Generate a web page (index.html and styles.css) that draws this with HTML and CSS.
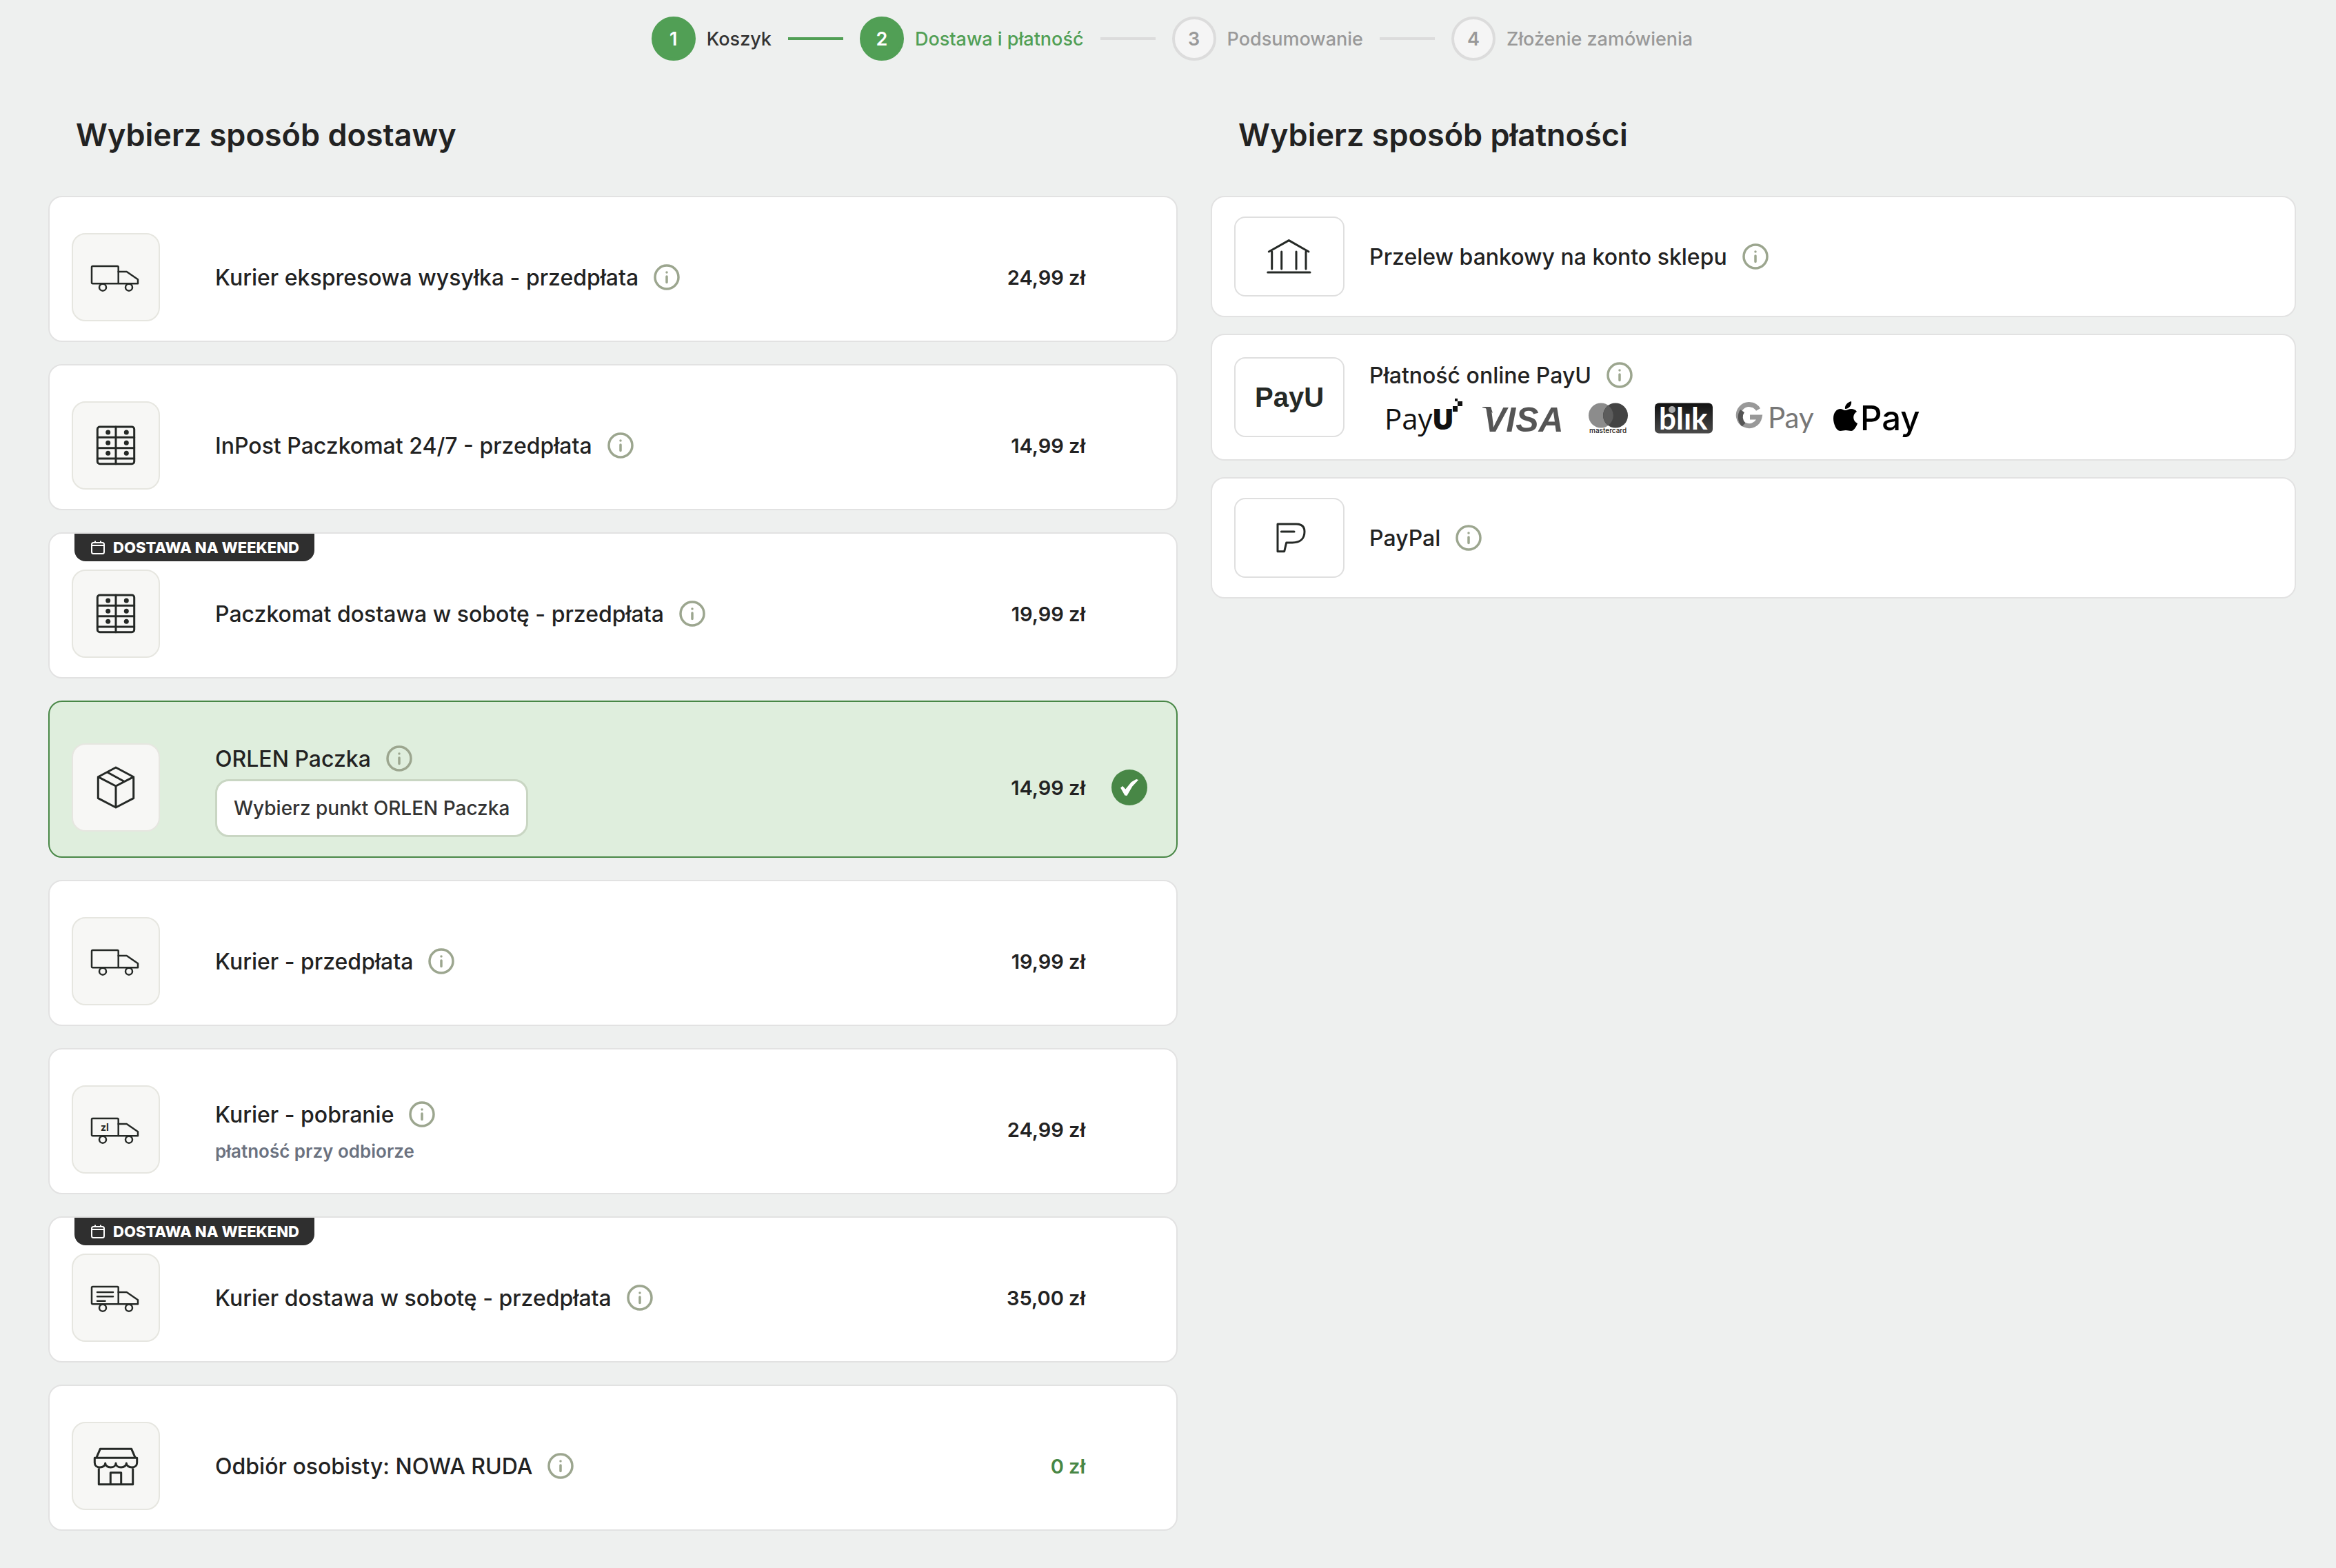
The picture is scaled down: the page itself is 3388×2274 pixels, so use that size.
FILE: index.html
```html
<!DOCTYPE html>
<html lang="pl">
<head>
<meta charset="UTF-8" />
<meta name="viewport" content="width=device-width, initial-scale=1" />
<title>Dostawa i płatność</title>
<link rel="stylesheet" href="styles.css">
</head>
<body>

<!-- icon definitions -->
<svg class="sprite" aria-hidden="true">
  <symbol id="i-info" viewBox="0 0 38 38">
    <circle cx="19" cy="19" r="17" fill="none" stroke="currentColor" stroke-width="3.500" />
    <path d="M19 18v8.500M19 12v.1" fill="none" stroke="currentColor" stroke-width="3.500" stroke-linecap="round" />
  </symbol>
  <symbol id="i-truck" viewBox="0 0 80 80">
    <rect x="5" y="24" width="38.700" height="25.300" rx="1.500" />
    <path d="M43.700 32h12L72 43.300v6H43.700" />
    <circle class="wheel" cx="21" cy="54.700" r="5" />
    <circle class="wheel" cx="59" cy="54.700" r="5" />
  </symbol>
  <symbol id="i-locker" viewBox="0 0 80 80">
    <g stroke-width="3">
      <rect x="13.300" y="13" width="53.400" height="53.700" rx="3.500" />
      <path d="M40 13v53.700M13.300 28.300h53.400M13.300 43.700h53.400M13.300 59h53.400" />
    </g>
    <g fill="currentColor" stroke="none">
      <circle cx="28.700" cy="21" r="3.500" /><circle cx="55.300" cy="21" r="3.500" />
      <circle cx="28.700" cy="36.300" r="3.500" /><circle cx="55.300" cy="36.300" r="3.500" />
      <circle cx="28.700" cy="51.300" r="3.500" /><circle cx="55.300" cy="51.300" r="3.500" />
    </g>
  </symbol>
  <symbol id="i-box" viewBox="0 0 80 80">
    <path stroke-width="3" d="M40 11l25.700 13.700v31L40 69 14.300 55.700v-31zM14.300 24.700L40 38l25.700-13.300M40 38v31M27.300 17.700L52 31.300" />
  </symbol>
  <symbol id="i-store" viewBox="0 0 80 80">
    <path stroke-width="3" d="M11.700 28.300l5.600-13h45.400l5.600 13M9.300 28.300h61.400v7c0 4-3 6.700-7.600 6.700s-7.800-2.700-7.800-6c0 3.300-3.100 6-7.700 6S40 39.300 40 36c0 3.300-3 6-7.600 6s-7.700-2.700-7.700-6c0 3.300-3.100 6-7.700 6s-7.700-2.700-7.700-6.700zM15.300 42v24.700h49.400V42M32.300 66.700v-17h15.400v17" />
  </symbol>
  <symbol id="i-bank" viewBox="0 0 80 80">
    <path stroke-width="3" d="M10.300 33l29-16.400L68 33M14.700 33v25M28.700 33v25M50 33v25M64 33v25M8.700 63H70" />
  </symbol>
  <symbol id="i-paypal" viewBox="0 0 80 80">
    <path stroke-width="3" d="M23 20h27c8 0 12 4 12 11 0 10-6 16-17.700 16h-8.600l-3 12.700H23zM28.300 31H47" />
  </symbol>
  <symbol id="i-calendar" viewBox="0 0 20 20">
    <rect x="1" y="3" width="18" height="16" rx="2.500" fill="none" stroke="currentColor" stroke-width="2" />
    <path d="M1 7h18M6 .5V4M14 .5V4" fill="none" stroke="currentColor" stroke-width="2" />
  </symbol>
</svg>

<main class="checkout">
  <ol class="steps">
    <li class="step done"><span class="num">1</span><span>Koszyk</span></li>
    <li class="step current" aria-current="step"><span class="num">2</span><span>Dostawa i płatność</span></li>
    <li class="step"><span class="num">3</span><span>Podsumowanie</span></li>
    <li class="step"><span class="num">4</span><span>Złożenie zamówienia</span></li>
  </ol>

  <div class="columns">
    <section>
      <h2>Wybierz sposób dostawy</h2>
      <div class="deliveries">

        <div class="delivery">
          <span class="tile"><svg class="icon"><use href="#i-truck" /></svg></span>
          <div class="body">
            <div class="name"><label for="d1">Kurier ekspresowa wysyłka - przedpłata</label><button class="info" type="button" aria-label="Informacje"><svg><use href="#i-info" /></svg></button></div>
          </div>
          <span class="price">24,99 zł</span>
          <input class="pick" type="radio" name="delivery" id="d1">
        </div>

        <div class="delivery">
          <span class="tile"><svg class="icon"><use href="#i-locker" /></svg></span>
          <div class="body">
            <div class="name"><label for="d2">InPost Paczkomat 24/7 - przedpłata</label><button class="info" type="button" aria-label="Informacje"><svg><use href="#i-info" /></svg></button></div>
          </div>
          <span class="price">14,99 zł</span>
          <input class="pick" type="radio" name="delivery" id="d2">
        </div>

        <div class="delivery">
          <span class="badge"><svg><use href="#i-calendar" /></svg>DOSTAWA NA WEEKEND</span>
          <span class="tile"><svg class="icon"><use href="#i-locker" /></svg></span>
          <div class="body">
            <div class="name"><label for="d3">Paczkomat dostawa w sobotę - przedpłata</label><button class="info" type="button" aria-label="Informacje"><svg><use href="#i-info" /></svg></button></div>
          </div>
          <span class="price">19,99 zł</span>
          <input class="pick" type="radio" name="delivery" id="d3">
        </div>

        <div class="delivery selected">
          <span class="tile"><svg class="icon"><use href="#i-box" /></svg></span>
          <div class="body">
            <div class="name"><label for="d4">ORLEN Paczka</label><button class="info" type="button" aria-label="Informacje"><svg><use href="#i-info" /></svg></button></div>
            <button class="point" type="button">Wybierz punkt ORLEN Paczka</button>
          </div>
          <span class="price">14,99 zł</span>
          <input class="pick" type="radio" name="delivery" id="d4" checked>
        </div>

        <div class="delivery">
          <span class="tile"><svg class="icon"><use href="#i-truck" /></svg></span>
          <div class="body">
            <div class="name"><label for="d5">Kurier - przedpłata</label><button class="info" type="button" aria-label="Informacje"><svg><use href="#i-info" /></svg></button></div>
          </div>
          <span class="price">19,99 zł</span>
          <input class="pick" type="radio" name="delivery" id="d5">
        </div>

        <div class="delivery">
          <span class="tile"><svg class="icon" viewBox="0 0 80 80"><use href="#i-truck" /><text class="zl" x="18" y="42">zl</text></svg></span>
          <div class="body">
            <div class="name"><label for="d6">Kurier - pobranie</label><button class="info" type="button" aria-label="Informacje"><svg><use href="#i-info" /></svg></button></div>
            <p class="note">płatność przy odbiorze</p>
          </div>
          <span class="price">24,99 zł</span>
          <input class="pick" type="radio" name="delivery" id="d6">
        </div>

        <div class="delivery">
          <span class="badge"><svg><use href="#i-calendar" /></svg>DOSTAWA NA WEEKEND</span>
          <span class="tile"><svg class="icon" viewBox="0 0 80 80"><use href="#i-truck" /><path d="M13 32h23M13 38.300h23M13 44.700h11.500" /></svg></span>
          <div class="body">
            <div class="name"><label for="d7">Kurier dostawa w sobotę - przedpłata</label><button class="info" type="button" aria-label="Informacje"><svg><use href="#i-info" /></svg></button></div>
          </div>
          <span class="price">35,00 zł</span>
          <input class="pick" type="radio" name="delivery" id="d7">
        </div>

        <div class="delivery">
          <span class="tile"><svg class="icon"><use href="#i-store" /></svg></span>
          <div class="body">
            <div class="name"><label for="d8">Odbiór osobisty: NOWA RUDA</label><button class="info" type="button" aria-label="Informacje"><svg><use href="#i-info" /></svg></button></div>
          </div>
          <span class="price free">0 zł</span>
          <input class="pick" type="radio" name="delivery" id="d8">
        </div>

      </div>
    </section>

    <section>
      <h2>Wybierz sposób płatności</h2>
      <div class="payments">

        <div class="payment">
          <span class="tile"><svg class="icon"><use href="#i-bank" /></svg></span>
          <div class="body">
            <div class="name"><label for="p1">Przelew bankowy na konto sklepu</label><button class="info" type="button" aria-label="Informacje"><svg><use href="#i-info" /></svg></button></div>
          </div>
          <input class="pick" type="radio" name="payment" id="p1">
        </div>

        <div class="payment">
          <span class="tile payu">PayU</span>
          <div class="body">
            <div class="name"><label for="p2">Płatność online PayU</label><button class="info" type="button" aria-label="Informacje"><svg><use href="#i-info" /></svg></button></div>
            <svg class="logos" viewBox="0 0 820 64" role="img" aria-label="PayU, Visa, Mastercard, Blik, Google Pay, Apple Pay">
              <defs>
                <linearGradient id="blik" x1="0" y1="0" x2="0" y2="1">
                  <stop offset="0" stop-color="#111" />
                  <stop offset="1" stop-color="#4a4a4a" />
                </linearGradient>
              </defs>
              <!-- PayU -->
              <text class="l-payu" x="22" y="49">Pay</text>
              <text class="l-payu-u" x="91" y="49">U</text>
              <path d="M124 4h4v4h-4zM128 8h7v7h-7zM121 15h7v8h-7z" fill="#111" />
              <!-- Visa -->
              <text class="l-visa" x="165" y="52">VISA</text>
              <path d="M164 16h12l3 9c-4-4-9-7-15-8z" fill="#555" />
              <!-- Mastercard -->
              <circle cx="336" cy="28.500" r="18" fill="#8c8c8c" />
              <circle cx="357" cy="28.500" r="18" fill="#434343" />
              <path d="M346.500 14a18 18 0 0 1 0 29 18 18 0 0 1 0-29z" fill="#5c5c5c" />
              <text class="l-mc" x="319" y="54">mastercard</text>
              <!-- Blik -->
              <rect x="414" y="10.500" width="84" height="44" rx="6" fill="url(#blik)" />
              <text class="l-blik" x="420" y="49">blık</text>
              <circle cx="439" cy="20" r="5" fill="#aaa" />
              <!-- Google Pay -->
              <path d="M564 20a15.500 15.500 0 1 0 2 11h-14" fill="none" stroke="#999" stroke-width="7" />
              <path d="M541 22a15.500 15.500 0 0 0 2 20" fill="none" stroke="#555" stroke-width="7" />
              <text class="l-gpay" x="578" y="47">Pay</text>
              <!-- Apple Pay -->
              <path d="M699 8c1 5-3 11-9 11-1-5 4-10 9-11zM690 21c3 0 5-2 9-2 3 0 6 1 8 4-7 4-6 14 1 17-2 6-6 11-9 11s-5-1-8-1-5 1-8 1c-6 0-10-11-10-18 0-9 5-14 10-14 3 0 5 2 7 2z" fill="#000" />
              <text class="l-apple" x="712" y="50">Pay</text>
            </svg>
          </div>
          <input class="pick" type="radio" name="payment" id="p2">
        </div>

        <div class="payment">
          <span class="tile"><svg class="icon"><use href="#i-paypal" /></svg></span>
          <div class="body">
            <div class="name"><label for="p3">PayPal</label><button class="info" type="button" aria-label="Informacje"><svg><use href="#i-info" /></svg></button></div>
          </div>
          <input class="pick" type="radio" name="payment" id="p3">
        </div>

      </div>
    </section>
  </div>
</main>

</body>
</html>
```
FILE: styles.css
```css
* {
  box-sizing: border-box;
}
body {
  margin: 0;
  background: #eef0ef;
  color: #222;
  font-family: Inter, sans-serif;
  font-size: 32px;
}
.sprite {
  position: absolute;
  width: 0;
  height: 0;
}
.checkout {
  padding: 24px 58px 54px 70px;
}

/* progress bar */
.steps {
  display: flex;
  justify-content: center;
  gap: 24px;
  margin: 0;
  padding: 0;
  list-style: none;
}
.step {
  display: flex;
  align-items: center;
  gap: 16px;
  height: 64px;
  font-size: 27px;
  font-weight: 500;
  color: #999;
}
.step + .step::before {
  content: "";
  width: 80px;
  height: 4px;
  margin-right: 8px;
  background: #dcdcdc;
}
.num {
  display: flex;
  align-items: center;
  justify-content: center;
  width: 64px;
  height: 64px;
  border: 4px solid #dcdcdc;
  border-radius: 50%;
  background: #f5f5f5;
  font-weight: 600;
}
.step.done {
  color: #333;
}
.step.current {
  color: #519f55;
}
.step.done .num,
.step.current .num {
  border-color: #519f55;
  background: #519f55;
  color: #fff;
}
.step.current::before {
  background: #519f55;
}

/* columns */
.columns {
  display: grid;
  grid-template-columns: 51fr 49fr;
  gap: 48px;
}
h2 {
  margin: 76px 40px 56px;
  font-size: 45px;
  line-height: 64px;
  font-weight: 600;
}
.deliveries {
  display: grid;
  gap: 32px;
}
.payments {
  display: grid;
  gap: 24px;
}
.delivery,
.payment {
  position: relative;
  display: flex;
  align-items: center;
  border: 2px solid #e2e2e2;
  border-radius: 20px;
  background: #fff;
}
.delivery {
  gap: 38px;
  padding: 52px 42px 28px 32px;
}
.payment {
  padding: 28px 42px 28px 32px;
}
.delivery.selected {
  border-color: #488746;
  background: #dfeedd;
}
.tile {
  display: flex;
  flex: none;
  align-items: center;
  justify-content: center;
  color: #252926;
}
.delivery .tile {
  width: 128px;
  height: 128px;
  margin-right: 42px;
  border: 2px solid #e6e6e0;
  border-radius: 20px;
  background: #f7f7f5;
}
.payment .tile {
  width: 160px;
  height: 116px;
  margin-right: 36px;
  border: 2px solid #dfdfdf;
  border-radius: 16px;
}
.tile.payu {
  font-family: "Liberation Sans", Arial, sans-serif;
  font-size: 40px;
  font-weight: 700;
}
.icon {
  width: 80px;
  height: 80px;
  fill: none;
  stroke: currentColor;
  stroke-width: 2.5;
  stroke-linecap: round;
  stroke-linejoin: round;
}
.wheel {
  fill: #f7f7f5;
}
.zl {
  font-size: 14px;
  font-weight: 700;
  fill: currentColor;
  stroke: none;
}
.body {
  flex: 1;
}
.name {
  display: flex;
  align-items: center;
  gap: 22px;
  height: 60px;
  font-weight: 500;
}
.info {
  width: 38px;
  height: 38px;
  padding: 0;
  border: none;
  background: none;
  color: #9ca68f;
  cursor: pointer;
}
.info svg {
  display: block;
  width: 38px;
  height: 38px;
}
.note {
  margin: 4px 0 0;
  font-size: 26px;
  line-height: 40px;
  font-weight: 600;
  color: #6b7280;
}
.point {
  display: block;
  height: 84px;
  padding: 0 24px;
  border: 3px solid #c9d6c3;
  border-radius: 20px;
  background: #fff;
  font-family: inherit;
  font-size: 28px;
  font-weight: 500;
  color: #333;
  cursor: pointer;
}
.price {
  font-size: 29px;
  font-weight: 600;
}
.price.free {
  color: #488746;
}

/* the radio is only seen when ticked */
.pick {
  appearance: none;
  flex: none;
  display: flex;
  align-items: center;
  justify-content: center;
  width: 52px;
  height: 52px;
  margin: 0;
  border-radius: 50%;
  cursor: pointer;
}
.pick:checked {
  background: #488746;
}
.pick:checked::after {
  content: "";
  width: 26px;
  height: 24px;
  background: #fff;
  clip-path: polygon(0 52%, 12% 42%, 28% 60%, 60% 18%, 88% 0, 100% 4%, 66% 44%, 36% 100%, 24% 98%);
}
.badge {
  position: absolute;
  top: 0;
  left: 36px;
  display: flex;
  align-items: center;
  gap: 12px;
  height: 40px;
  padding: 0 22px 0 24px;
  border-radius: 0 0 16px 16px;
  background: #2f2f2f;
  color: #fff;
  font-size: 22px;
  font-weight: 800;
}
.badge svg {
  width: 20px;
  height: 20px;
}

/* payment logos */
.logos {
  display: block;
  width: 820px;
  height: 64px;
}
.l-payu {
  font: 400 42px "Open Sans", sans-serif;
  fill: #111;
}
.l-payu-u {
  font: 800 42px "Open Sans", sans-serif;
  fill: #111;
}
.l-visa {
  font: italic 700 50px "Liberation Sans", Arial, sans-serif;
  fill: #555;
}
.l-mc {
  font: 500 10px Inter, sans-serif;
  fill: #222;
}
.l-blik {
  font: 700 44px Lato, sans-serif;
  fill: #fff;
}
.l-gpay {
  font: 400 42px Lato, sans-serif;
  fill: #777;
}
.l-apple {
  font: 500 49px Inter, sans-serif;
  fill: #000;
}
```
